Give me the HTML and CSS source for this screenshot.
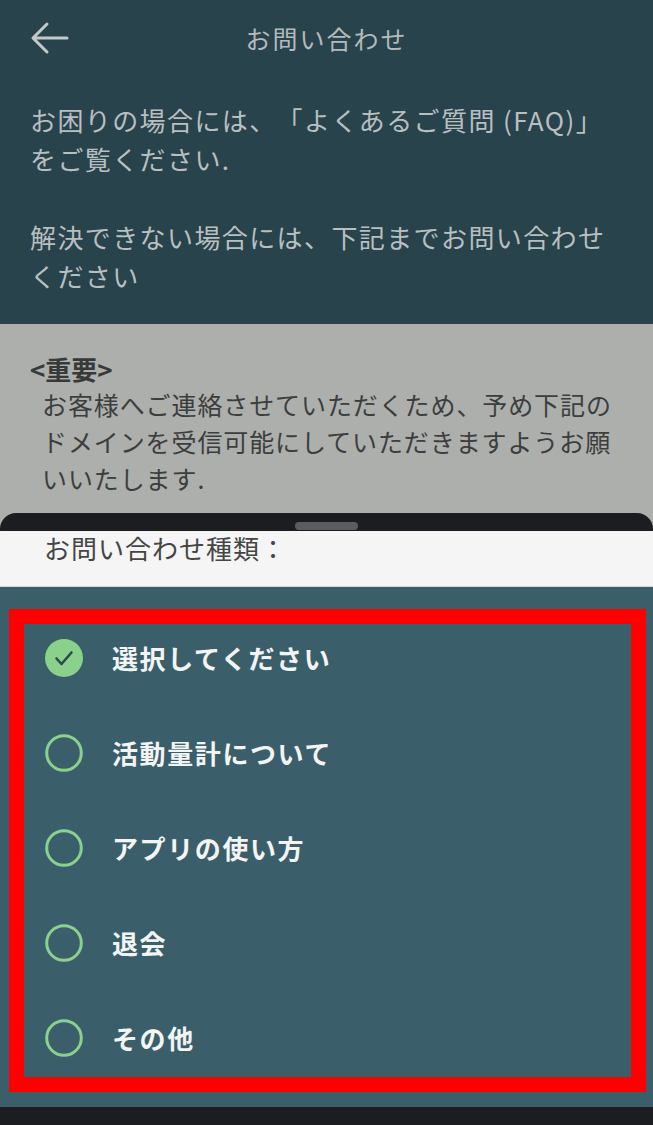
FILE: index.html
```html
<!DOCTYPE html>
<html lang="ja">
<head>
<meta charset="utf-8">
<title>お問い合わせ</title>
<link rel="stylesheet" href="styles.css">
</head>
<body>
<div class="screen">
  <header class="top">
    <div class="topbar">
      <svg class="back" width="40" height="34" viewBox="0 0 40 34" aria-hidden="true">
        <path d="M37 17 H4 M17 3 L3 17 L17 31" fill="none" stroke="#c3c8ca" stroke-width="3" stroke-linecap="round" stroke-linejoin="round"/>
      </svg>
      <h1 class="title">お問い合わせ</h1>
    </div>
    <div class="intro">
      <p>お困りの場合には、「よくあるご質問 (FAQ)」<br>をご覧ください.</p>
      <p>解決できない場合には、下記までお問い合わせ<br>ください</p>
    </div>
  </header>

  <section class="notice">
    <div class="notice-title">&lt;重要&gt;</div>
    <p class="notice-text">お客様へご連絡させていただくため、予め下記の<br>ドメインを受信可能にしていただきますようお願<br>いいたします.</p>
    <div class="grab"><span class="handle"></span></div>
  </section>

  <div class="label">お問い合わせ種類：</div>

  <section class="picker">
    <div class="options">
      <div class="option">
        <svg class="radio" width="38" height="38" viewBox="0 0 38 38" aria-hidden="true">
          <circle cx="19" cy="19" r="19" fill="#8ad18c"/>
          <path d="M11.5 19.5 L16.5 25 L26.5 13.5" fill="none" stroke="#2b4a52" stroke-width="2.6" stroke-linecap="round" stroke-linejoin="round"/>
        </svg>
        <span class="option-text">選択してください</span>
      </div>
      <div class="option">
        <svg class="radio" width="38" height="38" viewBox="0 0 38 38" aria-hidden="true">
          <circle cx="19" cy="19" r="17.3" fill="none" stroke="#8cd08f" stroke-width="3"/>
        </svg>
        <span class="option-text">活動量計について</span>
      </div>
      <div class="option">
        <svg class="radio" width="38" height="38" viewBox="0 0 38 38" aria-hidden="true">
          <circle cx="19" cy="19" r="17.3" fill="none" stroke="#8cd08f" stroke-width="3"/>
        </svg>
        <span class="option-text">アプリの使い方</span>
      </div>
      <div class="option">
        <svg class="radio" width="38" height="38" viewBox="0 0 38 38" aria-hidden="true">
          <circle cx="19" cy="19" r="17.3" fill="none" stroke="#8cd08f" stroke-width="3"/>
        </svg>
        <span class="option-text">退会</span>
      </div>
      <div class="option">
        <svg class="radio" width="38" height="38" viewBox="0 0 38 38" aria-hidden="true">
          <circle cx="19" cy="19" r="17.3" fill="none" stroke="#8cd08f" stroke-width="3"/>
        </svg>
        <span class="option-text">その他</span>
      </div>
    </div>
  </section>

  <div class="navbar"></div>
</div>
</body>
</html>
```

FILE: styles.css
```css
* { box-sizing: border-box; }

html, body {
  margin: 0;
  padding: 0;
}

body {
  width: 653px;
  height: 1125px;
  overflow: hidden;
  font-family: "Noto Sans CJK JP", "Noto Sans", sans-serif;
  text-spacing-trim: space-all;
}

.screen {
  display: flex;
  flex-direction: column;
  width: 653px;
  height: 1125px;
}

.top {
  background: #29434c;
  height: 324px;
  flex: none;
}

.topbar {
  height: 76px;
  display: flex;
  align-items: center;
  justify-content: center;
  position: relative;
}

.back {
  position: absolute;
  left: 30px;
  top: 21px;
}

.title {
  margin: 0;
  font-size: 25px;
  font-weight: 400;
  letter-spacing: 2px;
  line-height: 34px;
  color: #b3babc;
}

.intro {
  padding: 24px 0 0 30px;
}

.intro p {
  margin: 0 0 39px;
  font-size: 26px;
  line-height: 39px;
  letter-spacing: 1.4px;
  color: #b8bfc1;
}

.intro p:last-child {
  margin-bottom: 0;
}

.notice {
  background: #adafac;
  padding-top: 27px;
  flex: none;
}

.notice-title {
  padding-left: 30px;
  font-size: 26px;
  line-height: 35px;
  font-weight: 700;
  color: #383a3a;
}

.notice-text {
  margin: 0;
  padding-left: 42px;
  font-size: 25px;
  line-height: 37px;
  letter-spacing: 0.9px;
  color: #3c3e3e;
}

.grab {
  margin-top: 16px;
  height: 18px;
  background: #1c1d20;
  border-radius: 16px 16px 0 0;
  display: flex;
  justify-content: center;
}

.handle {
  margin-top: 9px;
  width: 63px;
  height: 8px;
  border-radius: 4px;
  background: #5b5c60;
}

.label {
  flex: none;
  height: 56px;
  background: #f5f5f5;
  border-bottom: 1px solid #d3d9db;
  padding-left: 44px;
  font-size: 26px;
  line-height: 34px;
  letter-spacing: 1px;
  color: #444646;
}

.picker {
  flex: none;
  height: 520px;
  background: #3b5f6a;
  padding: 22px 7px 0 9px;
}

.options {
  border: 15px solid #ff0000;
  height: 483px;
  padding: 0 0 5px 21px;
  display: flex;
  flex-direction: column;
  gap: 27px;
}

.option {
  height: 68px;
  display: flex;
  align-items: center;
  gap: 29px;
}

.radio {
  flex: none;
}

.option-text {
  font-size: 26px;
  font-weight: 700;
  letter-spacing: 1.6px;
  color: #f3f5f5;
  line-height: 34px;
}

.navbar {
  flex: 1;
  background: #1c1d20;
}
```
